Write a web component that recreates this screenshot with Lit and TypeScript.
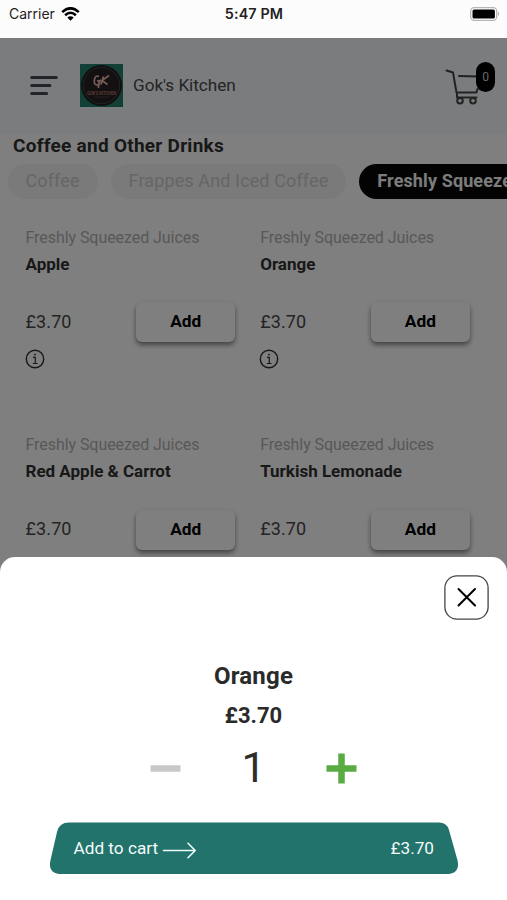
import { LitElement, html, css } from "lit";
import { customElement, property } from "lit/decorators.js";

@customElement("menu-item")
class MenuItem extends LitElement {
  @property() name = "";
  static styles = css`
    :host { display: block; width: 234.7px; height: 207.5px; padding: 0 25px 0 0; box-sizing: border-box; }
    .category { font-size: 16px; line-height: 20px; color: #b0b0b0; letter-spacing: -0.06px; white-space: nowrap; }
    .name { font-size: 17px; line-height: 20px; font-weight: 700; color: #303030; margin-top: 6px; white-space: nowrap; }
    .row { display: flex; align-items: center; justify-content: space-between; margin-top: 28px; height: 41px; }
    .price { font-size: 18px; color: #484848; letter-spacing: .1px; padding-bottom: 2px; }
    .add { width: 99px; height: 40px; padding-bottom: 2px; box-sizing: border-box; border-radius: 6px; display: grid; place-items: center; font-size: 17.3px; font-weight: 700; color: #000; background: #fff; box-shadow: 0 3px 5px rgba(0,0,0,.48); }
    .info { display: block; margin-top: 6.5px; margin-left: -1px; }
  `;
  render() {
    return html`
      <div class="category">Freshly Squeezed Juices</div>
      <div class="name">${this.name}</div>
      <div class="row"><span class="price">£3.70</span><span class="add">Add</span></div>
      <svg class="info" width="20" height="20" viewBox="0 0 20 20" fill="none" stroke="#303030" stroke-width="1.4">
        <circle cx="10" cy="10" r="8.7"/><path d="M8 8.3h2.3v6M7.8 14.5h4.8" stroke-width="1.2"/><circle cx="10" cy="5.6" r=".7" fill="#303030" stroke-width=".6"/>
      </svg>`;
  }
}

@customElement("app-root")
class AppRoot extends LitElement {
  static styles = css`
    :host { display: flex; flex-direction: column; position: relative; width: 507px; height: 900px; overflow: hidden; background: #fff; font-family: Roboto, sans-serif; }
    .status { height: 37.5px; flex: none; display: grid; grid-template-columns: 1fr auto 1fr; padding: 0 7px 0 9px; box-sizing: border-box; background: #fcfcfc; color: #222; font-family: Inter, sans-serif; font-size: 14px; }
    .status > * { height: 27px; display: flex; align-items: center; }
    .carrier { gap: 6px; }
    .time { font-weight: 600; font-size: 14.3px; letter-spacing: .15px; margin-right: 1px; }
    .battery { justify-content: flex-end; }
    .page { position: relative; flex: 1; min-height: 0; overflow: hidden; }
    .header { display: flex; align-items: center; height: 96px; box-sizing: border-box; padding: 0 12px 0 30px; background: #f5f9fb; }
    .logo { margin-left: 22px; }
    .brand { margin-left: 10px; font-size: 17.2px; color: #4a4a4a; letter-spacing: -.05px; padding-bottom: 2px; }
    .cart { margin-left: auto; position: relative; width: 50px; height: 46px; margin-top: -2px; }
    .badge { position: absolute; right: 0; top: 0; width: 19px; height: 30px; border-radius: 10px; background: #000; color: #d0d0d0; font-size: 12px; display: grid; place-items: center; }
    .title { font-size: 19px; line-height: 24px; font-weight: 700; color: #303030; padding-left: 13px; letter-spacing: .26px; }
    .tabs { display: flex; margin: 6px 0 0 7.5px; gap: 13px; white-space: nowrap; }
    .tab { height: 35px; line-height: 34px; border-radius: 18px; padding: 0 18px; font-size: 18px; letter-spacing: .12px; color: #ccc; background: #f4f4f4; flex: none; box-sizing: border-box; }
    .active { background: #060606; color: #f8f8f8; font-weight: 700; }
    .items { display: grid; grid-template-columns: 234.7px 234.7px; padding: 29.2px 0 0 25.5px; }
    .shade { position: absolute; inset: 0; background: rgba(0,0,0,.5); }
    .sheet { position: absolute; left: 0; right: 0; bottom: 0; height: 343.5px; border-radius: 15px 15px 0 0; background: #fff; display: flex; flex-direction: column; align-items: center; }
    .close { align-self: flex-end; margin: 18px 18px 0 0; display: block; flex: none; }
    .product { font-size: 24px; line-height: 30px; font-weight: 700; color: #2a2a2a; margin-top: 41px; letter-spacing: .2px; }
    .cost { font-size: 22px; line-height: 26px; font-weight: 700; color: #2a2a2a; margin-top: 12px; }
    .stepper { display: grid; grid-template-columns: 31px 1fr 31px; width: 207px; align-items: center; justify-items: center; height: 50px; margin-top: 14.5px; }
    .count { font-size: 43px; line-height: 50px; color: #2d2d2d; margin-top: -2px; }
    .submit { position: relative; width: 410px; height: 53px; margin-top: 28.5px; color: #f2fbf9; font-size: 17.2px; }
    .submit > svg { display: block; }
    .label { position: absolute; inset: 0; display: flex; align-items: center; padding: 0 24.5px 0 25px; }
    .arrow { margin: 4px auto 0 4px; }
  `;
  render() {
    return html`
      <div class="status">
        <span class="carrier">Carrier
          <svg width="19" height="14" viewBox="0 0 19 14" fill="none" stroke="#000" stroke-width="2.6"><path d="M1.2 5.1Q9.5-2.4 17.8 5.1M4.1 8.2Q9.5 3.3 14.9 8.2"/><path d="M9.5 13.8 6.3 10.5Q9.5 7.8 12.7 10.5Z" fill="#000" stroke="none"/></svg>
        </span>
        <span class="time">5:47 PM</span>
        <span class="battery"><svg width="30" height="14" viewBox="0 0 30 14"><rect x=".7" y=".7" width="26" height="12.6" rx="3.5" fill="#fff" stroke="#b5b5b5" stroke-width="1.3"/><rect x="2.5" y="2.5" width="22.4" height="9" rx="1.5"/><path d="M28.2 4.8q2 2.2 0 4.4Z" fill="#aaa"/></svg></span>
      </div>
      <div class="page">
        <div class="header">
          <svg width="28" height="21" viewBox="0 0 28 21" stroke="#454854" stroke-width="3" stroke-linecap="round"><path d="M1.7 2.5h24.6M1.7 10.5h18.2M1.7 18.5h15"/></svg>
          <svg class="logo" width="43" height="43" viewBox="0 0 43 43">
            <rect width="43" height="43" fill="#26806c"/><circle cx="21.5" cy="21.5" r="20.5" fill="#211f20"/><circle cx="21.5" cy="21.5" r="18.2" fill="#252122" stroke="#565050" stroke-width=".7"/>
            <path d="M19 12.5q-3.500-1.500-4.500 2.500-1 5.500 2 6 3 0 3.500-4.500l-3 .5M19.500 16.500l-1.200 7.500M23.500 12.500l-2.500 8M29 11.500l-7 5 5.500 4" fill="none" stroke="#f0b4aa" stroke-width="1.700"/>
            <text x="21.5" y="30.5" text-anchor="middle" font-size="5" font-weight="700" fill="#b8736a" textLength="29" lengthAdjust="spacingAndGlyphs">GOK'S KITCHEN</text><path d="M15 33h14" stroke="#61413d" stroke-width=".8"/>
          </svg>
          <span class="brand">Gok's Kitchen</span>
          <span class="cart">
            <svg width="50" height="46" viewBox="0 0 50 46" fill="none" stroke="#454545" stroke-width="2" stroke-linecap="round" stroke-linejoin="round"><path d="M1.500 8.500 8 10.500 11.500 30.500H31.500L32.500 27M14 14 34 14.500M12 31V35.500H31.500"/><circle cx="15" cy="38.700" r="2.800"/><circle cx="28" cy="38.700" r="2.800"/></svg>
            <span class="badge">0</span>
          </span>
        </div>
        <div class="title">Coffee and Other Drinks</div>
        <div class="tabs"><span class="tab">Coffee</span><span class="tab">Frappes And Iced Coffee</span><span class="tab active">Freshly Squeezed Juices</span></div>
        <div class="items">${["Apple", "Orange", "Red Apple & Carrot", "Turkish Lemonade"].map((n) => html`<menu-item .name=${n}></menu-item>`)}</div>
        <div class="shade"></div>
      </div>
      <div class="sheet">
        <svg class="close" width="45" height="45" viewBox="0 0 45 45" fill="none" stroke="#444"><rect x=".9" y=".9" width="43.2" height="43.2" rx="12" stroke-width="1.3"/><path d="m14.5 14 16.5 16.5M31 14 14.5 30.5" stroke="#000" stroke-width="2" stroke-linecap="round"/></svg>
        <div class="product">Orange</div>
        <div class="cost">£3.70</div>
        <div class="stepper">
          <svg width="31" height="31" viewBox="0 0 31 31"><path d="M.5 15.5h30" stroke="#c8c8ca" stroke-width="6.5"/></svg>
          <span class="count">1</span>
          <svg width="31" height="31" viewBox="0 0 31 31"><path d="M.5 15.5h30M15.5.5v30" stroke="#58ac41" stroke-width="6.5"/></svg>
        </div>
        <div class="submit">
          <svg width="410" height="53" viewBox="0 0 410 53"><path d="M20 .5H390Q398 .5 400 8L408.7 39Q411 52 397 52H13Q-1 52 1.3 39L8 10Q10 .5 20 .5Z" fill="#22736b"/></svg>
          <div class="label"><span>Add to cart</span><svg class="arrow" width="35" height="17" viewBox="0 0 35 17" fill="none" stroke="#edfaf7" stroke-width="1.6" stroke-linecap="round" stroke-linejoin="round"><path d="M1.5 8.5H33M26 1.2 33.2 8.5 26 15.8"/></svg><span>£3.70</span></div>
        </div>
      </div>`;
  }
}
